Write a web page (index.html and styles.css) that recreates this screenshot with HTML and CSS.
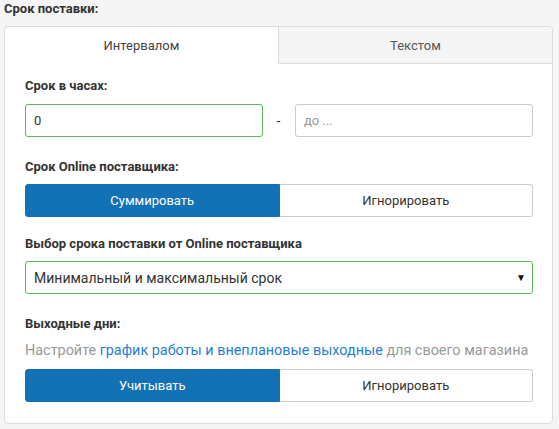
FILE: index.html
```html
<!DOCTYPE html>
<html lang="ru">
<head>
<meta charset="utf-8">
<link rel="stylesheet" href="styles.css">
</head>
<body>
<div class="page">
  <div class="title">Срок поставки:</div>
  <div class="card">
    <div class="tabs">
      <div class="tab active">Интервалом</div>
      <div class="tab">Текстом</div>
    </div>
    <div class="content">
      <div class="label l1">Срок в часах:</div>
      <div class="range">
        <div class="input valid">0</div>
        <div class="dash">-</div>
        <div class="input placeholder">до ...</div>
      </div>
      <div class="label l2">Срок Online поставщика:</div>
      <div class="toggle">
        <div class="opt on">Суммировать</div>
        <div class="opt">Игнорировать</div>
      </div>
      <div class="label l3">Выбор срока поставки от Online поставщика</div>
      <div class="select"><span>Минимальный и максимальный срок</span><span class="arrow">▼</span></div>
      <div class="label l4">Выходные дни:</div>
      <div class="hint">Настройте <a href="#">график работы и внеплановые выходные</a> для своего магазина</div>
      <div class="toggle t2">
        <div class="opt on">Учитывать</div>
        <div class="opt">Игнорировать</div>
      </div>
    </div>
  </div>
</div>
</body>
</html>
```

FILE: styles.css
```css
* { box-sizing: border-box; }
html, body { margin: 0; padding: 0; background: #f5f5f5; }
body { font-family: Roboto, "Liberation Sans", sans-serif; color: #333; width: 559px; height: 429px; overflow: hidden; }
.page { padding: 0 6px 0 4px; }
.title { font-weight: bold; font-size: 13px; height: 26px; line-height: 18px; padding-top: 0; }
.card { background: #fff; border: 1px solid #dcdcdc; border-radius: 4px; height: 398px; }
.tabs { display: flex; height: 37px; }
.tab { flex: 1; display: flex; align-items: center; justify-content: center; font-size: 13px; color: #444; }
.tab.active { border-radius: 4px 4px 0 0; }
.tab:not(.active) { background: #f5f5f5; border-left: 1px solid #dcdcdc; border-bottom: 1px solid #dcdcdc; border-radius: 0 4px 0 0; color: #555; }
.content { padding: 0 19px 0 20px; }
.label { font-weight: bold; font-size: 13px; line-height: 16px; }
.l1 { margin-top: 14px; }
.range { display: flex; align-items: center; margin-top: 10px; }
.input { height: 33px; width: 238px; border: 1px solid #ccc; border-radius: 3px; padding: 0 8px; font-size: 13px; line-height: 31px; color: #333; }
.input.valid { border-color: #5cb85c; }
.input.placeholder { color: #999; }
.dash { width: 32px; text-align: center; font-size: 14px; padding-right: 1px; }
.l2 { margin-top: 22px; }
.toggle { display: flex; margin-top: 9px; height: 33px; }
.opt { flex: 1; display: flex; align-items: center; justify-content: center; font-size: 13px; border: 1px solid #ccc; color: #333; }
.opt:last-child { border-left: 0; border-radius: 0 3px 3px 0; }
.opt.on { background: #1371b6; border-color: #1371b6; color: #fff; border-radius: 3px 0 0 3px; }
.l3 { margin-top: 19px; }
.select { margin-top: 9px; height: 33px; border: 1px solid #5cb85c; border-radius: 3px; display: flex; align-items: center; justify-content: space-between; padding: 0 6px 0 8px; font-size: 14px; color: #333; }
.arrow { font-size: 10px; color: #111; }
.l4 { margin-top: 22px; }
.hint { margin-top: 10px; font-size: 14.4px; color: #999; line-height: 18px; }
.hint a { color: #1f80d3; text-decoration: none; }
.t2 { margin-top: 9px; }
```
